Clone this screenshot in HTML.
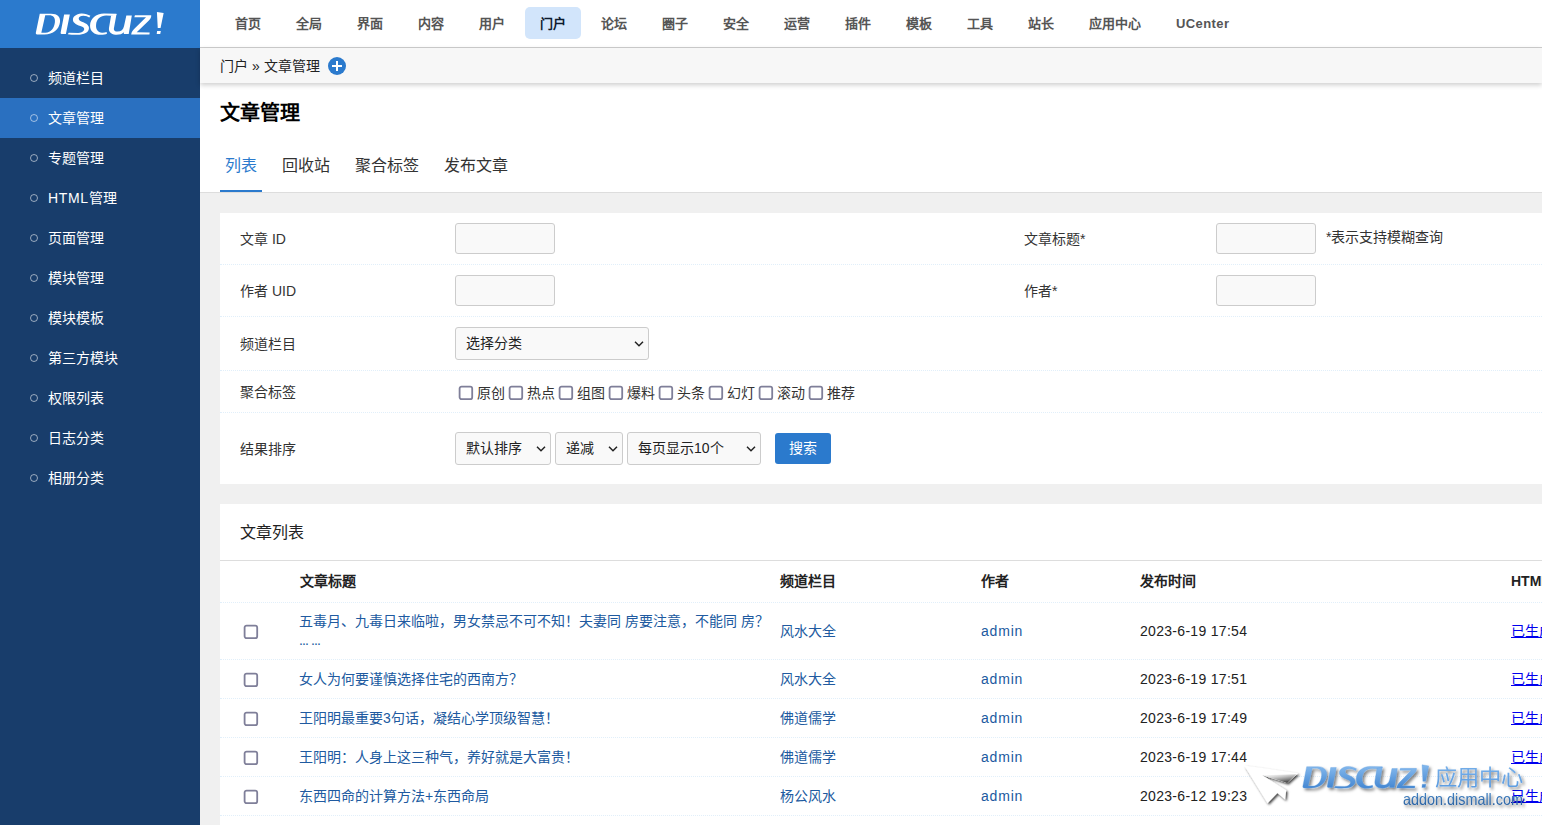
<!DOCTYPE html>
<html lang="zh-CN">
<head>
<meta charset="utf-8">
<title>Discuz! 管理中心</title>
<style>
*{box-sizing:border-box;margin:0;padding:0}
html,body{width:1542px;height:825px;overflow:hidden;background:#f0f0f0}
body{font-family:"Liberation Sans",sans-serif;font-size:14px;color:#333;position:relative}
a{text-decoration:none;color:inherit}
/* sidebar */
#side{position:absolute;left:0;top:0;width:200px;height:825px;background:#183d6b}
#logo{position:absolute;left:0;top:0;width:200px;height:48px;background:#2b7acd}
#menu{position:absolute;left:0;top:58px;width:200px;list-style:none}
#menu li{height:40px;line-height:40px;color:#fff;font-size:14px;padding-left:48px;position:relative}
#menu li:before{content:"";position:absolute;left:30px;top:16px;width:6px;height:6px;border:1px solid rgba(255,255,255,.55);border-radius:50%}
#menu li.on{background:#2a70c0}
/* top nav */
#top{position:absolute;left:200px;top:0;width:1342px;height:48px;background:#fff;border-bottom:1px solid #cfcfcf}
#nav{position:absolute;left:20px;top:7px;list-style:none;white-space:nowrap}
#nav li{float:left;height:32px;line-height:33px;padding:0 15px;margin-right:5px;font-size:13px;font-weight:bold;color:#555;border-radius:5px}
#nav li.on{background:#d2e5fb;color:#0d1b2e}
/* breadcrumb */
#crumb{position:absolute;left:200px;top:48px;width:1342px;height:35px;background:#f7f7f7;box-shadow:0 2px 5px rgba(0,0,0,.2);line-height:37px;padding-left:20px;font-size:14px;color:#222;z-index:2}
#crumb .plus{position:absolute;left:128px;top:9px;width:18px;height:18px;border-radius:50%;background:#2b7acd}
#crumb .plus:before{content:"";position:absolute;left:4px;top:8px;width:10px;height:2px;background:#fff}
#crumb .plus:after{content:"";position:absolute;left:8px;top:4px;width:2px;height:10px;background:#fff}
/* head */
#head{position:absolute;left:200px;top:83px;width:1342px;height:110px;background:#fff;border-bottom:1px solid #ddd}
#head h1{position:absolute;left:20px;top:17px;font-size:20px;line-height:26px;font-weight:bold;color:#000}
#tabs{position:absolute;left:20px;top:66px;list-style:none;white-space:nowrap}
#tabs li{float:left;height:43px;line-height:34px;padding:0 5px;margin-right:15px;font-size:16px;color:#333}
#tabs li.on{color:#2b7acd;border-bottom:2px solid #2b7acd}
/* form panel */
#form{position:absolute;left:220px;top:213px;width:1600px;height:271px;background:#fff}
.row{position:relative;border-bottom:1px dotted #e1effa}
.row .lb{position:absolute;left:20px;font-size:14px;color:#333}
.inp{position:absolute;width:100px;height:31px;border:1px solid #ccc;border-radius:3px;background:#f9f9f9}
.sel{position:absolute;height:33px;border:1px solid #ccc;border-radius:3px;background:#f9f9f9;font-size:14px;line-height:31px;padding-left:10px;color:#222}
.sel svg{position:absolute;right:4px;top:13px}
.row em{position:absolute;font-style:normal;font-size:14px;line-height:20px;color:#333;white-space:nowrap}
.cb{display:block}
.row .cb{position:absolute}
/* list */
#list{position:absolute;left:220px;top:504px;width:1600px;height:330px;background:#fff}
#list h2{position:absolute;left:20px;top:0;height:56px;line-height:58px;font-size:16px;font-weight:normal;color:#222}
#list .hr{position:absolute;left:0;top:56px;width:100%;height:1px;background:#ddd}
.tr{position:absolute;left:0;width:100%;border-bottom:1px dotted #e1effa;font-size:14px}
.tr span{position:absolute;white-space:nowrap}
.tr .c0{left:23px;top:12px;line-height:0}
.tr .c1{left:79px;color:#205aa0}
.tr .c2{left:560px;color:#205aa0}
.tr .c3{left:761px;color:#205aa0;letter-spacing:.8px}
.tr .c4{left:920px;color:#222;letter-spacing:.3px}
.tr .c5{left:1291px;color:#0000ee;text-decoration:underline}
.tr.th .c1{left:80px}
.th span{letter-spacing:0 !important;font-weight:bold;font-size:14px;color:#222 !important;text-decoration:none !important}
</style>
</head>
<body>
<div id="side">
  <div id="logo">
    <svg style="position:absolute;left:20px;top:0" width="160" height="48" viewBox="0 0 1542 463"><g fill="#fff" fill-rule="evenodd">
<path d="M190,132 L300,132 C360,132 392,165 385,215 C376,285 320,332 235,332 L165,332 C152,332 150,322 153,312 Z M243,148 L205,315 L245,315 C300,315 330,270 336,215 C341,170 320,148 280,148 Z"/>
<path d="M425,140 L480,140 L442,328 L400,328 C392,328 390,320 392,312 Z"/>
<path d="M678,152 C655,138 620,128 590,130 C540,135 508,160 510,192 C512,225 550,238 600,258 C640,275 612,318 560,318 L470,316 L460,330 C500,336 540,336 575,334 C640,328 668,300 664,265 C660,235 625,222 590,208 C555,193 556,152 610,152 C635,152 655,160 668,170 Z"/>
<path d="M930,132 L810,130 C730,132 678,180 675,245 C673,300 715,336 780,336 C805,336 825,332 838,325 L835,308 C820,314 805,316 790,315 C750,312 730,280 733,240 C737,185 775,150 830,150 L878,152 L930,145 Z"/>
<path d="M878,150 L930,138 L905,275 C902,295 915,305 940,305 C975,305 995,285 1003,250 L1025,150 L1078,150 L1048,328 L1000,328 L1003,310 C985,328 955,336 920,334 C875,332 852,305 858,268 Z"/>
<path d="M1108,148 L1265,148 C1268,170 1255,185 1240,200 L1125,312 L1250,314 L1248,332 L1072,332 C1075,310 1085,295 1100,280 L1215,166 L1102,166 Z"/>
<path d="M1320,115 L1385,125 L1355,270 L1328,270 Z M1322,298 L1358,298 L1352,328 L1318,328 Z"/>
</g></svg>
  </div>
  <ul id="menu">
    <li>频道栏目</li>
    <li class="on">文章管理</li>
    <li>专题管理</li>
    <li><span style="letter-spacing:.65px">HTML</span>管理</li>
    <li>页面管理</li>
    <li>模块管理</li>
    <li>模块模板</li>
    <li>第三方模块</li>
    <li>权限列表</li>
    <li>日志分类</li>
    <li>相册分类</li>
  </ul>
</div>
<div id="top">
  <ul id="nav">
    <li>首页</li><li>全局</li><li>界面</li><li>内容</li><li>用户</li><li class="on">门户</li><li>论坛</li><li>圈子</li><li>安全</li><li>运营</li><li>插件</li><li>模板</li><li>工具</li><li>站长</li><li>应用中心</li><li style="letter-spacing:.4px">UCenter</li>
  </ul>
</div>
<div id="crumb">门户 » 文章管理<i class="plus"></i></div>
<div id="head">
  <h1>文章管理</h1>
  <ul id="tabs"><li class="on">列表</li><li>回收站</li><li>聚合标签</li><li>发布文章</li></ul>
</div>

<div id="form">
  <div class="row" style="height:52px">
    <span class="lb" style="top:15px">文章 ID</span><i class="inp" style="left:235px;top:10px"></i>
    <span class="lb" style="left:804px;top:15px">文章标题*</span><i class="inp" style="left:996px;top:10px"></i>
    <span class="lb" style="left:1106px;top:13px;font-size:14px">*表示支持模糊查询</span>
  </div>
  <div class="row" style="height:52px">
    <span class="lb" style="top:15px">作者 UID</span><i class="inp" style="left:235px;top:10px"></i>
    <span class="lb" style="left:804px;top:15px">作者*</span><i class="inp" style="left:996px;top:10px"></i>
  </div>
  <div class="row" style="height:54px">
    <span class="lb" style="top:16px">频道栏目</span>
    <div class="sel" style="left:235px;top:10px;width:194px">选择分类<svg width="10" height="6" viewBox="0 0 10 6"><path d="M1 .8l4 4 4-4" fill="none" stroke="#222" stroke-width="1.5"/></svg></div>
  </div>
  <div class="row" style="height:42px">
    <span class="lb" style="top:10px">聚合标签</span>
    <svg class="cb" width="16" height="16" viewBox="0 0 16 16" style="left:238px;top:14px"><rect x="1.6" y="1.6" width="12.6" height="12.6" rx="2" fill="#fff" stroke="#7f7f99" stroke-width="1.8"/></svg><em style="left:257px;top:12px">原创</em><svg class="cb" width="16" height="16" viewBox="0 0 16 16" style="left:288px;top:14px"><rect x="1.6" y="1.6" width="12.6" height="12.6" rx="2" fill="#fff" stroke="#7f7f99" stroke-width="1.8"/></svg><em style="left:307px;top:12px">热点</em><svg class="cb" width="16" height="16" viewBox="0 0 16 16" style="left:338px;top:14px"><rect x="1.6" y="1.6" width="12.6" height="12.6" rx="2" fill="#fff" stroke="#7f7f99" stroke-width="1.8"/></svg><em style="left:357px;top:12px">组图</em><svg class="cb" width="16" height="16" viewBox="0 0 16 16" style="left:388px;top:14px"><rect x="1.6" y="1.6" width="12.6" height="12.6" rx="2" fill="#fff" stroke="#7f7f99" stroke-width="1.8"/></svg><em style="left:407px;top:12px">爆料</em><svg class="cb" width="16" height="16" viewBox="0 0 16 16" style="left:438px;top:14px"><rect x="1.6" y="1.6" width="12.6" height="12.6" rx="2" fill="#fff" stroke="#7f7f99" stroke-width="1.8"/></svg><em style="left:457px;top:12px">头条</em><svg class="cb" width="16" height="16" viewBox="0 0 16 16" style="left:488px;top:14px"><rect x="1.6" y="1.6" width="12.6" height="12.6" rx="2" fill="#fff" stroke="#7f7f99" stroke-width="1.8"/></svg><em style="left:507px;top:12px">幻灯</em><svg class="cb" width="16" height="16" viewBox="0 0 16 16" style="left:538px;top:14px"><rect x="1.6" y="1.6" width="12.6" height="12.6" rx="2" fill="#fff" stroke="#7f7f99" stroke-width="1.8"/></svg><em style="left:557px;top:12px">滚动</em><svg class="cb" width="16" height="16" viewBox="0 0 16 16" style="left:588px;top:14px"><rect x="1.6" y="1.6" width="12.6" height="12.6" rx="2" fill="#fff" stroke="#7f7f99" stroke-width="1.8"/></svg><em style="left:607px;top:12px">推荐</em>
  </div>
  <div class="row" style="height:71px;border-bottom:none">
    <span class="lb" style="top:25px">结果排序</span>
    <div class="sel" style="left:235px;top:19px;width:96px">默认排序<svg width="10" height="6" viewBox="0 0 10 6"><path d="M1 .8l4 4 4-4" fill="none" stroke="#222" stroke-width="1.5"/></svg></div>
    <div class="sel" style="left:335px;top:19px;width:68px">递减<svg width="10" height="6" viewBox="0 0 10 6"><path d="M1 .8l4 4 4-4" fill="none" stroke="#222" stroke-width="1.5"/></svg></div>
    <div class="sel" style="left:407px;top:19px;width:134px">每页显示10个<svg width="10" height="6" viewBox="0 0 10 6"><path d="M1 .8l4 4 4-4" fill="none" stroke="#222" stroke-width="1.5"/></svg></div>
    <div style="position:absolute;left:555px;top:20px;width:56px;height:31px;background:#2b7acd;border-radius:3px;color:#fff;font-size:14px;line-height:31px;text-align:center">搜索</div>
  </div>
</div>

<div id="list">
  <h2>文章列表</h2>
  <div class="hr"></div>
  <div class="tr th" style="top:57px;height:42px;line-height:41px">
    <span class="c1">文章标题</span><span class="c2">频道栏目</span><span class="c3">作者</span><span class="c4">发布时间</span><span class="c5">HTML</span>
  </div>
  <div class="tr" style="top:99px;height:57px;line-height:56px">
    <span class="c0" style="top:21px"><svg class="cb" width="16" height="16" viewBox="0 0 16 16"><rect x="1.6" y="1.6" width="12.6" height="12.6" rx="2" fill="#fff" stroke="#7f7f99" stroke-width="1.8"/></svg></span>
    <span class="c1" style="line-height:19px;top:9px">五毒月、九毒日来临啦，男女禁忌不可不知！夫妻同 房要注意，不能同 房？<br><b style="font-weight:normal;letter-spacing:-.9px">... ...</b></span>
    <span class="c2">风水大全</span><span class="c3">admin</span><span class="c4">2023-6-19 17:54</span><span class="c5">已生成</span>
  </div>
  <div class="tr" style="top:156px;height:39px;line-height:38px">
    <span class="c0"><svg class="cb" width="16" height="16" viewBox="0 0 16 16"><rect x="1.6" y="1.6" width="12.6" height="12.6" rx="2" fill="#fff" stroke="#7f7f99" stroke-width="1.8"/></svg></span><span class="c1">女人为何要谨慎选择住宅的西南方？</span>
    <span class="c2">风水大全</span><span class="c3">admin</span><span class="c4">2023-6-19 17:51</span><span class="c5">已生成</span>
  </div>
  <div class="tr" style="top:195px;height:39px;line-height:38px">
    <span class="c0"><svg class="cb" width="16" height="16" viewBox="0 0 16 16"><rect x="1.6" y="1.6" width="12.6" height="12.6" rx="2" fill="#fff" stroke="#7f7f99" stroke-width="1.8"/></svg></span><span class="c1">王阳明最重要3句话，凝结心学顶级智慧！</span>
    <span class="c2">佛道儒学</span><span class="c3">admin</span><span class="c4">2023-6-19 17:49</span><span class="c5">已生成</span>
  </div>
  <div class="tr" style="top:234px;height:39px;line-height:38px">
    <span class="c0"><svg class="cb" width="16" height="16" viewBox="0 0 16 16"><rect x="1.6" y="1.6" width="12.6" height="12.6" rx="2" fill="#fff" stroke="#7f7f99" stroke-width="1.8"/></svg></span><span class="c1">王阳明：人身上这三种气，养好就是大富贵！</span>
    <span class="c2">佛道儒学</span><span class="c3">admin</span><span class="c4">2023-6-19 17:44</span><span class="c5">已生成</span>
  </div>
  <div class="tr" style="top:273px;height:39px;line-height:38px">
    <span class="c0"><svg class="cb" width="16" height="16" viewBox="0 0 16 16"><rect x="1.6" y="1.6" width="12.6" height="12.6" rx="2" fill="#fff" stroke="#7f7f99" stroke-width="1.8"/></svg></span><span class="c1">东西四命的计算方法+东西命局</span>
    <span class="c2">杨公风水</span><span class="c3">admin</span><span class="c4">2023-6-12 19:23</span><span class="c5">已生成</span>
  </div>
</div>
<svg id="wm" style="position:absolute;left:1236px;top:755px;z-index:5" width="306" height="70" viewBox="1236 755 306 70">
<defs>
<linearGradient id="g1" x1="0" y1="0" x2="0" y2="1"><stop offset="0" stop-color="#82b7ec"/><stop offset="1" stop-color="#4487d2"/></linearGradient>
<linearGradient id="g2" x1="0" y1="0" x2="0" y2="1"><stop offset="0" stop-color="#76afe9"/><stop offset="1" stop-color="#5b9be0"/></linearGradient>
<linearGradient id="g3" x1="0" y1="0" x2="0" y2="1"><stop offset="0" stop-color="#4c8ccb"/><stop offset="1" stop-color="#245a9a"/></linearGradient>
<filter id="sh" x="-10%" y="-30%" width="120%" height="170%"><feDropShadow dx="2" dy="2.2" stdDeviation="1.5" flood-color="#000" flood-opacity=".5"/></filter>
<filter id="sh2" x="-20%" y="-20%" width="150%" height="150%"><feDropShadow dx="1.5" dy="1.6" stdDeviation="1" flood-color="#000" flood-opacity=".75"/></filter>
<linearGradient id="g4" x1="0.2" y1="0" x2="0.75" y2="1"><stop offset="0" stop-color="#ccc" stop-opacity=".15"/><stop offset=".55" stop-color="#777" stop-opacity=".7"/><stop offset="1" stop-color="#2a2a2a" stop-opacity="1"/></linearGradient>
</defs>
<path filter="url(#sh2)" fill="#fff" d="M1244.2,765.4 L1298.1,773.2 L1287.2,783 L1262.3,775.2 L1286.2,790.3 L1285.1,799.6 L1277.4,792.9 L1267.5,803.2 Z"/>
<path fill="url(#g4)" d="M1262.3,775.2 L1296.5,774.2 L1287.2,783 Z"/>
<g filter="url(#sh)">
<g transform="translate(1287.3,752.6) scale(0.1021,0.1063)" fill="url(#g1)" stroke="#5a9ade" stroke-width="3" stroke-linejoin="round" fill-rule="evenodd">
<path d="M190,132 L300,132 C360,132 392,165 385,215 C376,285 320,332 235,332 L165,332 C152,332 150,322 153,312 Z M243,148 L205,315 L245,315 C300,315 330,270 336,215 C341,170 320,148 280,148 Z"/>
<path d="M425,140 L480,140 L442,328 L400,328 C392,328 390,320 392,312 Z"/>
<path d="M678,152 C655,138 620,128 590,130 C540,135 508,160 510,192 C512,225 550,238 600,258 C640,275 612,318 560,318 L470,316 L460,330 C500,336 540,336 575,334 C640,328 668,300 664,265 C660,235 625,222 590,208 C555,193 556,152 610,152 C635,152 655,160 668,170 Z"/>
<path d="M930,132 L810,130 C730,132 678,180 675,245 C673,300 715,336 780,336 C805,336 825,332 838,325 L835,308 C820,314 805,316 790,315 C750,312 730,280 733,240 C737,185 775,150 830,150 L878,152 L930,145 Z"/>
<path d="M878,150 L930,138 L905,275 C902,295 915,305 940,305 C975,305 995,285 1003,250 L1025,150 L1078,150 L1048,328 L1000,328 L1003,310 C985,328 955,336 920,334 C875,332 852,305 858,268 Z"/>
<path d="M1108,148 L1265,148 C1268,170 1255,185 1240,200 L1125,312 L1250,314 L1248,332 L1072,332 C1075,310 1085,295 1100,280 L1215,166 L1102,166 Z"/>
<path d="M1320,115 L1385,125 L1355,270 L1328,270 Z M1322,298 L1358,298 L1352,328 L1318,328 Z"/>
</g>
<text x="1434.5" y="784.5" font-family="Liberation Sans, sans-serif" font-size="22" fill="url(#g2)" textLength="89" lengthAdjust="spacingAndGlyphs">应用中心</text>
<text x="1403" y="805" font-family="Liberation Sans, sans-serif" font-size="16.5" fill="url(#g3)" textLength="120" lengthAdjust="spacingAndGlyphs">addon.dismall.com</text>
</g>
</svg>
</body>
</html>
